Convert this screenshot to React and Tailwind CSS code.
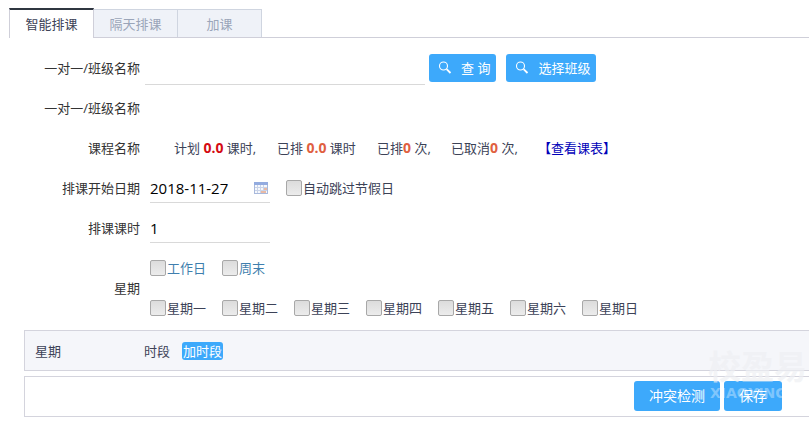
const tabs = ['智能排课', '隔天排课', '加课'];
const weekdays = ['星期一', '星期二', '星期三', '星期四', '星期五', '星期六', '星期日'];

function SearchIcon() {
  return (
    <svg className="h-4 w-4" viewBox="0 0 16 16" fill="none" stroke="currentColor" aria-hidden="true">
      <circle cx="6.5" cy="6" r="4" strokeWidth="1.1" />
      <path d="M9.6 9.2 13.5 13" strokeWidth="1.8" />
    </svg>
  );
}

function CalendarIcon() {
  return (
    <svg className="h-4 w-4" viewBox="0 0 16 16" aria-hidden="true">
      <rect x="1.5" y="2.5" width="13" height="11" fill="#f6f8fc" stroke="#a9b9dc" />
      <rect x="1" y="2" width="14" height="3" fill="#93abdf" />
      <path d="M4.5 5v8M7.5 5v8M10.5 5v8M2 7.5h12M2 10.5h12" stroke="#c9d3e8" />
      <path d="M11 8h3v2h-3zM8 11h5v2H8z" fill="#e8b9a4" />
    </svg>
  );
}

function SearchButton({ children }) {
  return (
    <button type="button" className="flex h-7 items-center gap-2 rounded-[3px] bg-[#3da9fb] pr-1.5 pl-2 text-[13px] text-white">
      <SearchIcon />
      <span>{children}</span>
    </button>
  );
}

function Check({ label, className = '' }) {
  return (
    <label className={`flex items-center gap-px ${className}`}>
      <input
        type="checkbox"
        className="h-4 w-4 appearance-none rounded-xs border border-[#a8a8a8] bg-linear-to-b from-[#dcdcdc] to-[#ececec] checked:bg-[#3da9fb]"
      />
      {label}
    </label>
  );
}

function Row({ label, htmlFor, children }) {
  return (
    <div className="flex h-10 items-center">
      <label htmlFor={htmlFor} className="w-[140px] shrink-0 text-right text-[#333]">
        {label}
      </label>
      {children}
    </div>
  );
}

function Count({ children, className = 'text-[#e0603f]' }) {
  return <b className={`text-sm leading-5 ${className}`}>{children}</b>;
}

export default function App() {
  return (
    <div className="relative overflow-hidden bg-white pt-2 font-['Open_Sans','Noto_Sans_CJK_SC',sans-serif] text-[13px] leading-5 text-[#3c4257]">
      <div role="tablist" className="ml-[9px] flex border-b border-[#cfcfd9]">
        {tabs.map((tab, i) => (
          <button
            key={tab}
            type="button"
            role="tab"
            aria-selected={i === 0}
            className={
              i === 0
                ? '-mb-px h-[30px] w-[85px] border-x border-t-2 border-x-[#cfcfd9] border-t-[#2f3640] bg-white text-[#3c4257]'
                : 'mt-px h-7 w-[84px] border-t border-r border-[#cfd5e0] bg-[#eff2f8] text-[#9aa5b9]'
            }
          >
            {tab}
          </button>
        ))}
      </div>

      <form className="pt-2.5" onSubmit={(e) => e.preventDefault()}>
        <Row label="一对一/班级名称" htmlFor="className">
          <input id="className" type="text" className="mr-1 ml-[5px] h-[34px] w-[280px] border-b border-[#d9d9d9] outline-none" />
          <div className="flex gap-2.5">
            <SearchButton>查 询</SearchButton>
            <SearchButton>选择班级</SearchButton>
          </div>
        </Row>
        <Row label="一对一/班级名称" />
        <Row label="课程名称">
          <p className="ml-[34px] flex whitespace-nowrap">
            <span className="w-[103px]">计划 <Count className="text-[#d40b12]">0.0</Count> 课时,</span>
            <span className="w-[100px]">已排 <Count>0.0</Count> 课时</span>
            <span className="w-[74px]">已排<Count>0</Count> 次,</span>
            <span className="w-[87px]">已取消<Count>0</Count> 次,</span>
            <a href="#schedule" className="text-[#0000b8]">【查看课表】</a>
          </p>
        </Row>
        <Row label="排课开始日期" htmlFor="startDate">
          <div className="ml-2.5 flex h-[30px] w-[120px] items-center border-b border-[#d9d9d9]">
            <input id="startDate" type="text" defaultValue="2018-11-27" className="w-[103px] text-[15px] text-black outline-none" />
            <CalendarIcon />
          </div>
          <Check label="自动跳过节假日" className="ml-4" />
        </Row>
        <Row label="排课课时" htmlFor="hours">
          <input id="hours" type="text" defaultValue="1" className="ml-2.5 h-[30px] w-[120px] border-b border-[#d9d9d9] text-[15px] text-black outline-none" />
        </Row>
        <div className="flex items-center">
          <span className="w-[140px] shrink-0 text-right text-[#333]">星期</span>
          <div className="ml-2.5">
            <div className="flex h-10 items-center text-[#3f7fae]">
              <Check label="工作日" className="w-[72px]" />
              <Check label="周末" className="w-[72px]" />
            </div>
            <div className="flex h-10 items-center">
              {weekdays.map((day) => (
                <Check key={day} label={day} className="w-[72px]" />
              ))}
            </div>
          </div>
        </div>

        <div className="mt-0.5 ml-6 flex h-[41px] items-center border-y border-l border-[#d4d4dd] bg-[#f5f6fa] pl-2.5">
          <span className="w-[109px]">星期</span>
          <span>时段</span>
          <button type="button" className="ml-3 h-[18px] rounded-[3px] bg-[#3da9fb] px-px leading-[18px] text-white">加时段</button>
        </div>

        <div className="mt-[5px] ml-6 flex h-[41px] items-start justify-end gap-1 border-y border-l border-[#d4d4dd] pt-1 pr-[27px] text-sm text-white">
          <button type="submit" className="h-[30px] rounded-[3px] bg-[#3da9fb] px-[15px]">冲突检测</button>
          <button type="submit" className="h-[30px] rounded-[3px] bg-[#3da9fb] px-[15px]">保存</button>
        </div>
      </form>

      {/* brand watermark */}
      <div className="pointer-events-none absolute right-0 bottom-4 w-[101px] whitespace-nowrap" aria-hidden="true">
        <div className="text-[33px] leading-9 font-bold text-[#eeeff3]/70">校盈易</div>
        <div className="pl-0.5 font-['DejaVu_Sans'] text-sm leading-4 font-bold text-white/35">XIAOYING</div>
      </div>
    </div>
  );
}
